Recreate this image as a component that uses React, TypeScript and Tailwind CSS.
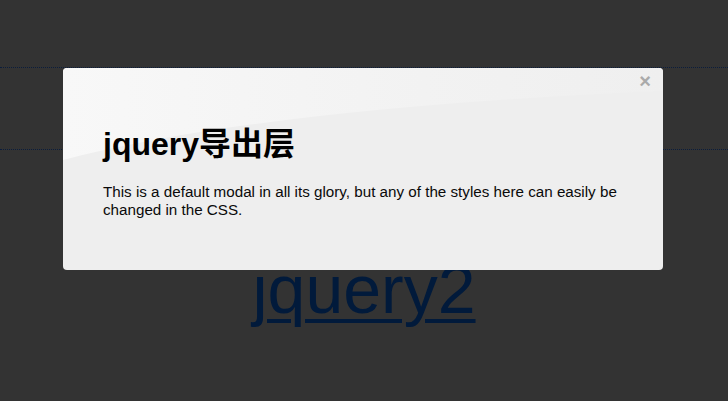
import React from "react";

function Gloss() {
  return (
    <svg
      className="absolute inset-0 h-full w-full"
      viewBox="0 0 600 202"
      preserveAspectRatio="none"
      aria-hidden="true"
    >
      <defs>
        <linearGradient id="gloss" x1="0" y1="0" x2="1" y2="0">
          <stop offset="0" stopColor="#f8f8f8" />
          <stop offset="0.6" stopColor="#f2f2f2" />
          <stop offset="1" stopColor="#efefef" />
        </linearGradient>
      </defs>
      <path d="M0 0 H600 V23 Q200 40 0 92 Z" fill="url(#gloss)" />
    </svg>
  );
}

function Modal() {
  return (
    <div className="absolute left-[63px] top-[68px] w-[600px] overflow-hidden rounded-[4px] bg-[#eeeeee] px-10 pt-[58px] pb-[51px]">
      <Gloss />
      <button className="absolute right-[12px] top-[1px] text-[20px] font-bold leading-[24px] text-[#aaaaaa]">
        ×
      </button>
      <div className="relative">
        <h1 className="text-[32px] font-bold leading-[36px] text-black [font-family:'Liberation_Sans','Noto_Sans_CJK_SC',sans-serif]">
          jquery导出层
        </h1>
        <p className="mt-[21px] text-[15.2px] leading-[18px] text-[#0a0a0a]">
          This is a default modal in all its glory, but any of the styles here can easily be changed in the CSS.
        </p>
      </div>
    </div>
  );
}

export default function App() {
  return (
    <div className="relative h-[401px] w-full overflow-hidden bg-[#333333] [font-family:'Liberation_Sans',Arial,sans-serif]">
      <div className="pt-[67px]">
        <div className="h-[83px] border-y border-dotted border-[#0b1d3c]" />
        <div className="mt-[103px] text-center">
          <a
            href="#"
            className="text-[68px] leading-[72px] text-[#011a3b] underline decoration-[4px] underline-offset-[6px]"
          >
            jquery2
          </a>
        </div>
      </div>
      <Modal />
    </div>
  );
}
